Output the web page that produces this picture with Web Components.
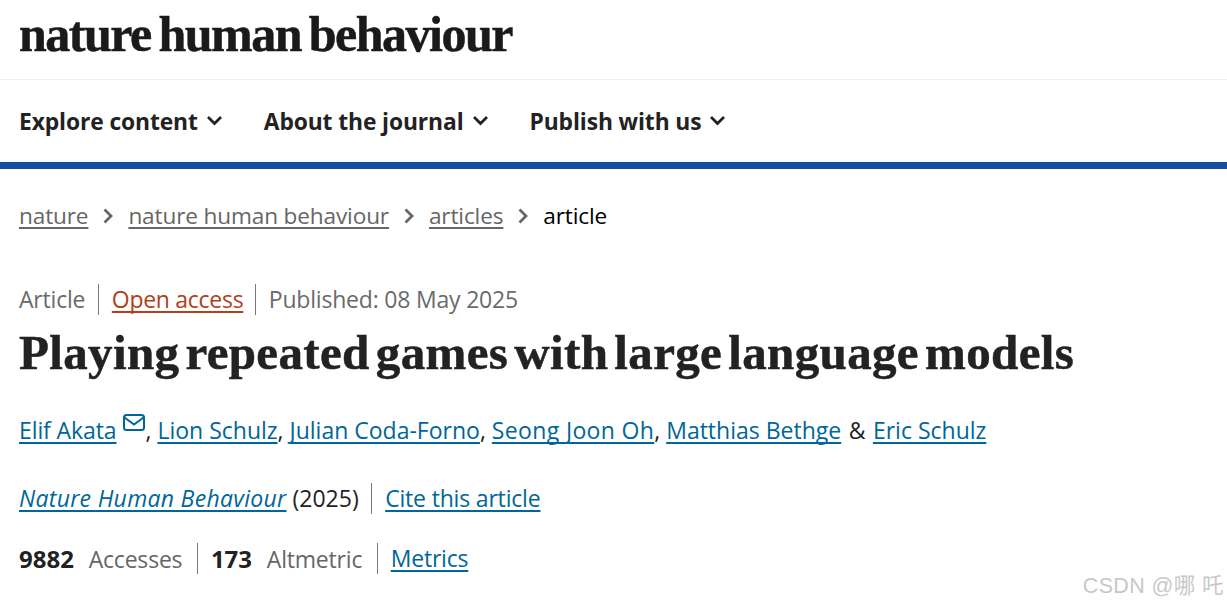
<!DOCTYPE html>
<html lang="en">
<head>
<meta charset="utf-8">
<title>Playing repeated games with large language models</title>
<style>
  html, body { margin: 0; background: #fff; }
  body { height: 606px; overflow: hidden; position: relative; font-family: "Open Sans", "Noto Sans", sans-serif; }
</style>
</head>
<body>
<nhb-logo>nature human behaviour</nhb-logo>
<nhb-nav>
  <nhb-nav-item>Explore content</nhb-nav-item>
  <nhb-nav-item>About the journal</nhb-nav-item>
  <nhb-nav-item>Publish with us</nhb-nav-item>
</nhb-nav>
<nhb-crumbs>
  <a href="#">nature</a>
  <a href="#">nature human behaviour</a>
  <a href="#">articles</a>
  <span>article</span>
</nhb-crumbs>
<nhb-article-head></nhb-article-head>
<nhb-watermark>CSDN @哪 吒</nhb-watermark>

<script>
// small helper, every element just stamps its html into an open shadow root
class Base extends HTMLElement {
  connectedCallback() {
    if (this.shadowRoot) return
    this.attachShadow({ mode: "open" }).innerHTML = this.html()
  }
}

class NhbLogo extends Base {
  html() {
    return `
      <style>
        :host { display: block; height: 79px; border-bottom: 1px solid #eeeeee; padding-left: 19px; }
        div {
          font: 700 50px/68px "Liberation Serif", serif;
          letter-spacing: -1.5px;
          word-spacing: -3.3px;
          -webkit-text-stroke: 0.5px #1a1a1a;
          color: #1a1a1a;
          white-space: nowrap;
        }
      </style>
      <div><slot></slot></div>
    `
  }
}

class NhbNav extends Base {
  html() {
    return `
      <style>
        :host {
          display: flex;
          gap: 41px;
          height: 82px;
          align-items: center;
          padding-left: 19px;
          border-bottom: 7px solid #174f9f;
        }
      </style>
      <slot></slot>
    `
  }
}

class NhbNavItem extends Base {
  html() {
    return `
      <style>
        :host {
          display: inline-flex;
          align-items: center;
          gap: 8px;
          padding-top: 2px;
          font: 700 22.8px/30px "Open Sans", sans-serif;
          letter-spacing: -0.1px;
          color: #222222;
          white-space: nowrap;
        }
        svg { display: block; width: 17px; height: 11px; margin-top: -3px; }
      </style>
      <slot></slot>
      <svg viewBox="0 0 17 11" fill="none" stroke="#222222" stroke-width="2.8"><path d="M2 2 8.5 8.5 15 2"/></svg>
    `
  }
}

class NhbCrumbs extends Base {
  html() {
    return `
      <style>
        :host {
          display: flex;
          align-items: center;
          padding: 32px 0 0 19px;
          height: 30px;
          font: 400 22.6px/30px "Open Sans", sans-serif;
          letter-spacing: -0.14px;
          white-space: nowrap;
        }
        ::slotted(a) {
          color: #666666;
          text-decoration: underline 2px;
          text-decoration-skip-ink: none;
          text-underline-offset: 3px;
        }
        ::slotted(span) { color: #000000; }
      </style>
      <slot></slot>
    `
  }
  connectedCallback() {
    super.connectedCallback()
    // chevrons go between the passed in crumbs
    const kids = [...this.children]
    kids.slice(0, -1).forEach(k => {
      const s = document.createElementNS("http://www.w3.org/2000/svg", "svg")
      s.setAttribute("viewBox", "0 0 10 16")
      s.setAttribute("width", "10")
      s.setAttribute("height", "16")
      s.style.margin = "0 15px 0 15px"
      s.style.flex = "none"
      s.innerHTML = '<path d="M1.5 1.5 8 8 1.5 14.5" fill="none" stroke="#666666" stroke-width="2.8"/>'
      k.after(s)
    })
  }
}

class NhbArticleHead extends Base {
  html() {
    return `
      <style>
        :host { display: block; padding: 53px 0 0 19px; color: #222222; font: 400 23px/30px "Open Sans", sans-serif; white-space: nowrap; }
        a {
          color: #006699;
          text-decoration: underline 2px;
          text-decoration-skip-ink: none;
          text-underline-offset: 3px;
        }
        .row { display: flex; align-items: center; }
        .cell { padding: 0 12.5px 0 13px; border-left: 1px solid #7a7a7a; height: 31px; line-height: 31px; }
        .cell:first-child { padding-left: 0; border-left: 0; }
        .meta { color: #6a6a6a; letter-spacing: -0.2px; }
        .meta a { color: #b0401a; letter-spacing: -0.28px; }
        .meta .open { padding-right: 11.5px; }
        h1 {
          margin: 8px 0 0;
          font: 700 49px/60px "Liberation Serif", serif;
          letter-spacing: 0.35px;
          word-spacing: -6.5px;
          -webkit-text-stroke: 0.5px #222222;
          color: #222222;
        }
        .authors { margin-top: 29px; height: 36px; line-height: 36px; }
        .authors svg { width: 22px; height: 17px; margin: 0 1px 0 6px; vertical-align: 8px; }
        .authors .first { letter-spacing: -0.1px; }
        .authors .wide { letter-spacing: 0.35px; }
        .authors .amp { margin: 0 1.5px; }
        .journal { margin-top: 35px; }
        .journal i { letter-spacing: 0.3px; }
        .journal .cite { letter-spacing: -0.18px; }
        .stats { margin-top: 29px; }
        .stats .cell { letter-spacing: -0.2px; padding-right: 14.5px; }
        .stats b { font-weight: 700; font-size: 24px; letter-spacing: 0; color: #222222; margin-right: 9px; }
        .stats .lbl { color: #666666; }
      </style>
      <div class="row meta">
        <span class="cell">Article</span>
        <span class="cell open"><a href="#">Open access</a></span>
        <span class="cell">Published: 08 May 2025</span>
      </div>
      <h1>Playing repeated games with large language models</h1>
      <div class="authors"><a href="#" class="first">Elif Akata</a><svg viewBox="0 0 22 17" fill="none" stroke="#006699" stroke-width="2"><rect x="1" y="1" width="20" height="15" rx="2.5"/><path d="M1.5 3.5 11 10.5 20.5 3.5"/></svg>, <a href="#">Lion Schulz</a>, <a href="#">Julian Coda-Forno</a>, <a href="#" class="wide">Seong Joon Oh</a>, <a href="#">Matthias Bethge</a> <span class="amp">&amp;</span> <a href="#">Eric Schulz</a></div>
      <div class="row journal">
        <span class="cell"><a href="#"><i>Nature Human Behaviour</i></a> (2025)</span>
        <span class="cell"><a href="#" class="cite">Cite this article</a></span>
      </div>
      <div class="row stats">
        <span class="cell"><b>9882</b> <span class="lbl">Accesses</span></span>
        <span class="cell"><b>173</b> <span class="lbl">Altmetric</span></span>
        <span class="cell"><a href="#">Metrics</a></span>
      </div>
    `
  }
}

class NhbWatermark extends Base {
  html() {
    return `
      <style>
        :host {
          position: absolute;
          right: 3px;
          top: 573px;
          font: 400 21.5px/26px "Liberation Sans", "Noto Sans CJK SC", sans-serif;
          color: #c8c8c8;
          letter-spacing: 0.4px;
          white-space: nowrap;
        }
      </style>
      <slot></slot>
    `
  }
}

customElements.define("nhb-logo", NhbLogo)
customElements.define("nhb-nav", NhbNav)
customElements.define("nhb-nav-item", NhbNavItem)
customElements.define("nhb-crumbs", NhbCrumbs)
customElements.define("nhb-article-head", NhbArticleHead)
customElements.define("nhb-watermark", NhbWatermark)
</script>
</body>
</html>
